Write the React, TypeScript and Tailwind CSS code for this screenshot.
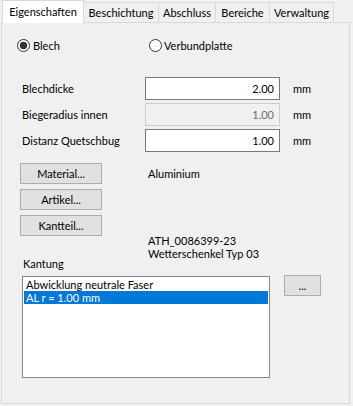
import React from "react";

function Radio({ checked }: { checked: boolean }) {
  return (
    <svg width="13" height="13" viewBox="0 0 13 13" className="shrink-0">
      <circle cx="6.5" cy="6.5" r="6" fill="#fff" stroke="#333" strokeWidth="1" />
      {checked && <circle cx="6.5" cy="6.5" r="3.7" fill="#333" />}
    </svg>
  );
}

function Field({ label, value, disabled }: { label: string; value: string; disabled?: boolean }) {
  return (
    <div className="flex items-center h-[23px]">
      <div className="w-[143px] pl-[20px]">{label}</div>
      <div
        className={
          disabled
            ? "w-[135px] h-[23px] border border-[#cccccc] bg-[#f0f0f0] text-[#6d6d6d] flex items-center justify-end pr-[5px]"
            : "w-[135px] h-[23px] border border-[#7a7a7a] bg-white flex items-center justify-end pr-[5px]"
        }
      >
        {value}
      </div>
      <div className="ml-[13px]">mm</div>
    </div>
  );
}

function Btn({ children, w }: { children: React.ReactNode; w: string }) {
  return (
    <div className={`${w} h-[21px] border border-[#adadad] bg-[#e1e1e1] flex items-center justify-center shrink-0`}>
      {children}
    </div>
  );
}

export default function App() {
  return (
    <div className="w-[353px] h-[406px] bg-[#f0f0f0] text-black font-['Lato',sans-serif] text-[11px] leading-[13px] overflow-hidden">
      <div className="relative z-10 flex items-end h-[22px] pl-[2px]">
        <div className="relative z-10 w-[82px] h-[23px] -mb-px bg-white border border-b-0 border-[#d9d9d9] flex justify-center pt-[4px]">
          Eigenschaften
        </div>
        <div className="-ml-px w-[76px] h-[20px] border border-b-0 border-[#d9d9d9] flex items-center justify-center">
          Beschichtung
        </div>
        <div className="-ml-px w-[58px] h-[20px] border border-b-0 border-[#d9d9d9] flex items-center justify-center">
          Abschluss
        </div>
        <div className="-ml-px w-[55px] h-[20px] border border-b-0 border-[#d9d9d9] flex items-center justify-center">
          Bereiche
        </div>
        <div className="-ml-px w-[65px] h-[20px] border border-b-0 border-[#d9d9d9] flex items-center justify-center">
          Verwaltung
        </div>
      </div>

      <div className="ml-px w-[349px] h-[382px] border border-[#d9d9d9] bg-[#f0f0f0] flex flex-col">
        <div className="mt-[16px] ml-[15px] flex items-center h-[13px]">
          <div className="w-[132px] flex items-center gap-[3px]">
            <Radio checked />
            <span>Blech</span>
          </div>
          <div className="flex items-center gap-[2px]">
            <Radio checked={false} />
            <span>Verbundplatte</span>
          </div>
        </div>

        <div className="mt-[25px] flex flex-col gap-[3px]">
          <Field label="Blechdicke" value="2.00" />
          <Field label="Biegeradius innen" value="1.00" disabled />
          <Field label="Distanz Quetschbug" value="1.00" />
        </div>

        <div className="mt-[11px] flex flex-col gap-[5px]">
          <div className="flex items-center h-[21px] pl-[18px]">
            <Btn w="w-[82px]">Material...</Btn>
            <div className="ml-[46px]">Aluminium</div>
          </div>
          <div className="flex items-center h-[21px] pl-[18px]">
            <Btn w="w-[82px]">Artikel...</Btn>
          </div>
          <div className="flex items-start h-[21px] pl-[18px]">
            <Btn w="w-[82px]">Kantteil...</Btn>
            <div className="ml-[46px] mt-[19px] whitespace-nowrap">
              <div>ATH_0086399-23</div>
              <div>Wetterschenkel Typ 03</div>
            </div>
          </div>
        </div>

        <div className="mt-[21px] pl-[21px] h-[13px]">Kantung</div>

        <div className="mt-[6px] flex items-start pl-[20px]">
          <div className="w-[248px] h-[102px] border border-[#828790] bg-white p-px">
            <div className="h-[13px] pl-[2px] flex items-center">Abwicklung neutrale Faser</div>
            <div className="h-[13px] pl-[2px] flex items-center bg-[#0078d7] text-white">AL r = 1.00 mm</div>
          </div>
          <div className="ml-[14px] -mt-px">
            <Btn w="w-[37px]">...</Btn>
          </div>
        </div>
      </div>
    </div>
  );
}
